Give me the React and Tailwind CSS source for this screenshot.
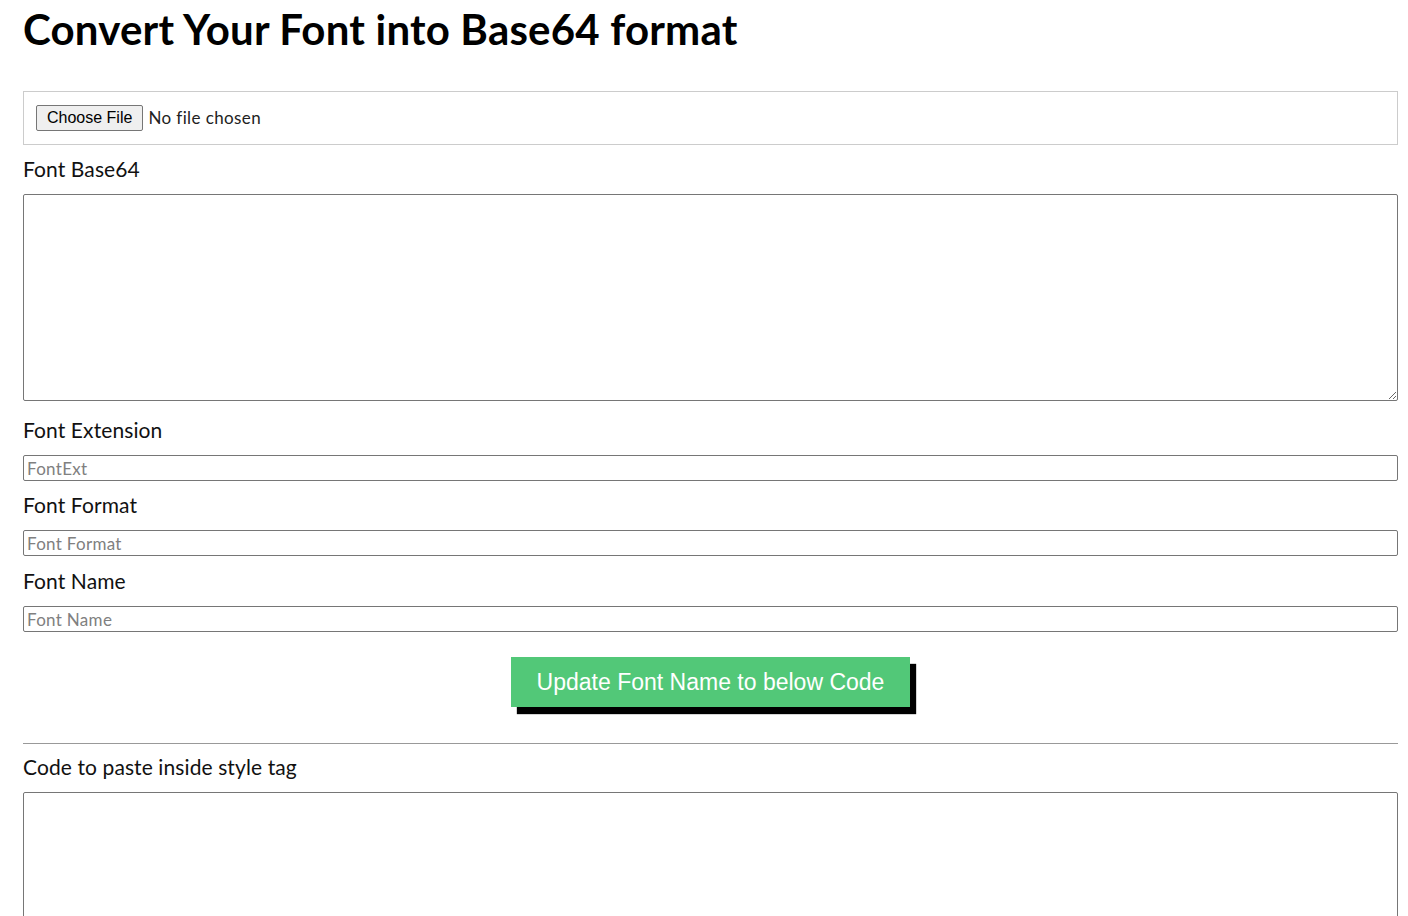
import React from "react";

const Field = ({ label, placeholder, top = "mt-[12px]" }) => (
  <>
    <label className={`block text-[21px] leading-[24px] tracking-[0.1px] text-[#111] mb-[13px] ${top}`}>
      {label}
    </label>
    <input
      type="text"
      placeholder={placeholder}
      className="block w-full h-[26px] border border-[#767676] rounded-[2px] px-[3px] text-[17px] tracking-[0.3px] text-[#222] placeholder:text-[#808080] outline-none"
    />
  </>
);

export default function App() {
  return (
    <div className="h-[916px] overflow-hidden bg-white pl-[23px] pr-[10px] font-[Lato,'Noto_Sans',sans-serif] text-[#111]">
      <h1 className="text-[42px] leading-[58px] tracking-[0.2px] font-bold text-black">
        Convert Your Font into Base64 format
      </h1>

      <div className="mt-[33px] border border-[#cccccc] h-[54px] flex items-center px-[12px]">
        <div className="flex items-center gap-[5px] text-[17px] text-[#222]">
          <button className="h-[26px] px-[10px] bg-[#efefef] border border-[#767676] rounded-[2px] text-[16px] text-black font-['Liberation_Sans',Arial,sans-serif]">
            Choose File
          </button>
          <span className="tracking-[0.4px]">No file chosen</span>
        </div>
      </div>

      <label className="block text-[21px] leading-[24px] tracking-[0.1px] mt-[12px] mb-[13px]">
        Font Base64
      </label>
      <textarea className="block w-full h-[207px] border border-[#767676] rounded-[2px] outline-none resize-y" />

      <div className="h-[5px]" />
      <Field label="Font Extension" placeholder="FontExt" />
      <Field label="Font Format" placeholder="Font Format" />
      <Field label="Font Name" placeholder="Font Name" top="mt-[13px]" />

      <div className="flex justify-center mt-[25px]">
        <button className="h-[50px] px-[26px] bg-[#52c878] text-white text-[23px] font-['Liberation_Sans',Arial,sans-serif] shadow-[6px_7px_1px_#000]">
          Update Font Name to below Code
        </button>
      </div>

      <hr className="mt-[36px] border-t border-[#999]" />

      <label className="block text-[21px] leading-[24px] tracking-[0.1px] mt-[11px] mb-[13px]">
        Code to paste inside style tag
      </label>
      <textarea className="block w-full h-[207px] border border-[#767676] rounded-[2px] outline-none resize-y" />
    </div>
  );
}
